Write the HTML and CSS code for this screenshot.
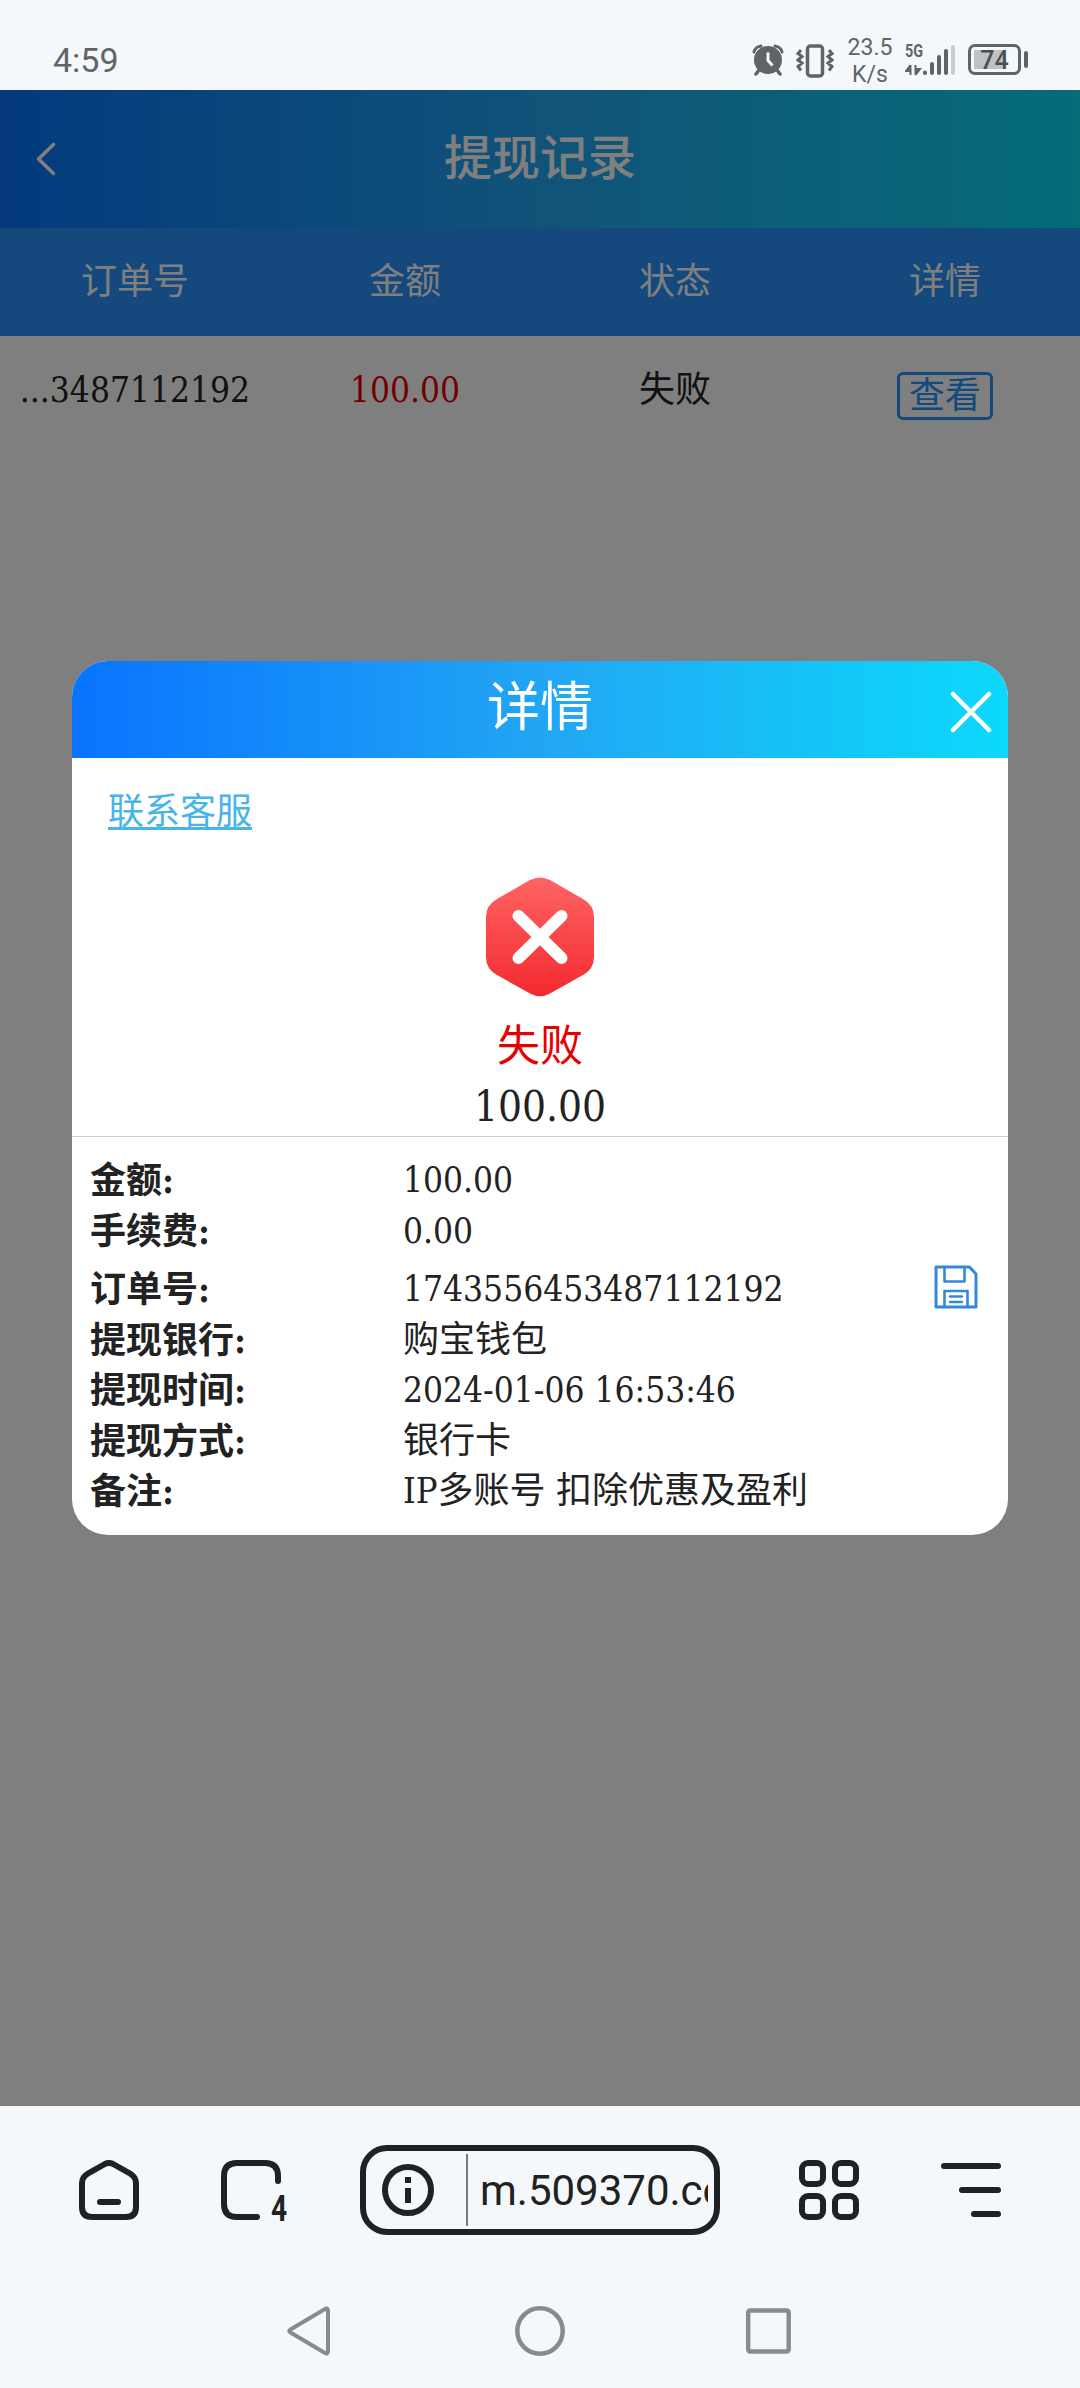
FILE: index.html
```
<!DOCTYPE html>
<html lang="zh-CN">
<head>
    <meta charset="UTF-8" />
    <title>提现记录</title>
    <link rel="stylesheet" href="styles.css">
</head>
<body>
    <div class="statusbar">
        <span class="clock">4:59</span>
        <div class="status_icons">
            <svg class="ic_alarm" width="32" height="32" viewBox="0 0 32 32">
                <circle cx="16" cy="16" r="14" fill="#616466"/>
                <path d="M2 8Q3 3 9 2M30 8Q29 3 23 2" fill="none" stroke="#616466" stroke-width="3" stroke-linecap="round"/>
                <path d="M7 26l-3 4M25 26l3 4" stroke="#616466" stroke-width="3.5" stroke-linecap="round"/>
                <path d="M16 8.500v8l4.500 5" fill="none" stroke="#f4f8fc" stroke-width="3"/>
            </svg>
            <svg class="ic_vibrate" width="38" height="34" viewBox="0 0 38 34">
                <rect x="11.500" y="2" width="15" height="30" rx="3" fill="none" stroke="#616466" stroke-width="3.500"/>
                <path d="M5 6l-3 3.500 4 3-4 3.500 4 3-4 3.500 3 4M33 6l3 3.500-4 3 4 3.500-4 3 4 3.500-3 4" fill="none" stroke="#616466" stroke-width="3"/>
            </svg>
            <div class="speed">23.5<br>K/s</div>
            <div class="signal">
                <span class="net">5G</span>
                <svg width="52" height="32" viewBox="0 0 52 32">
                    <path d="M5.500 21v10M5.500 21L1 27h4M10.500 21v10M10.500 31L15 25h-4" fill="#616466" stroke="#616466" stroke-width="2"/>
                    <path d="M20 28.500v.5M27 20v9M34 13v16M41 7v22" stroke="#616466" stroke-width="4" stroke-linecap="round"/>
                    <path d="M48 3v26" stroke="#cacdd0" stroke-width="4" stroke-linecap="round"/>
                </svg>
            </div>
            <div class="battery"><span>74</span></div>
        </div>
    </div>

    <div class="page">
        <div class="header">
            <svg class="back" width="22" height="36" viewBox="0 0 22 36">
                <path d="M18.500 3.500L3.500 18l15 14.500" fill="none" stroke="#fff" stroke-width="3.600" stroke-linecap="round" stroke-linejoin="round"/>
            </svg>
            <h1>提现记录</h1>
        </div>
        <div class="thead">
            <div>订单号</div>
            <div>金额</div>
            <div>状态</div>
            <div>详情</div>
        </div>
        <div class="trow">
            <div class="num">...3487112192</div>
            <div class="num red">100.00</div>
            <div>失败</div>
            <div><button class="btn_view">查看</button></div>
        </div>

        <div class="overlay">
            <div class="modal">
                <div class="modal_head">
                    <h2>详情</h2>
                    <svg class="close" width="42" height="42" viewBox="0 0 42 42">
                        <path d="M3 3l36 36M39 3L3 39" stroke="#fff" stroke-width="4.500" stroke-linecap="round"/>
                    </svg>
                </div>
                <div class="result">
                    <a class="service" href="#">联系客服</a>
                    <svg class="fail_icon" width="108" height="120" viewBox="0 0 108 120">
                        <defs>
                            <linearGradient id="fail" x1="0" y1="0" x2="0" y2="1">
                                <stop offset="0" stop-color="#ff6464"/>
                                <stop offset="1" stop-color="#f32a2f"/>
                            </linearGradient>
                        </defs>
                        <path d="M44 3Q54-2 64 3L97 22Q108 28 108 40V80Q108 92 97 98L64 116.500Q54 122 44 116.500L11 98Q0 92 0 80V40Q0 28 11 22Z" fill="url(#fail)"/>
                        <path d="M32.500 39l43 42M75.500 39l-43 42" stroke="#fff" stroke-width="12" stroke-linecap="round"/>
                    </svg>
                    <div class="result_text">失败</div>
                    <div class="result_amount">100.00</div>
                </div>
                <div class="details">
                    <div class="line"><b>金额:</b><span class="num">100.00</span></div>
                    <div class="line"><b>手续费:</b><span class="num">0.00</span></div>
                    <div class="line order">
                        <b>订单号:</b><span class="num">1743556453487112192</span>
                        <svg class="save" width="44" height="44" viewBox="0 0 44 44">
                            <path d="M2 2h33.500L42 9v33H2z" fill="none" stroke="#3388dc" stroke-width="3" stroke-linejoin="round"/>
                            <path d="M10.500 2v14.500h20V2M10.500 42V26h23v16M16 31.500h12M16 37h12" fill="none" stroke="#3388dc" stroke-width="2.600" stroke-linecap="round" stroke-linejoin="round"/>
                        </svg>
                    </div>
                    <div class="line"><b>提现银行:</b><span>购宝钱包</span></div>
                    <div class="line"><b>提现时间:</b><span class="num">2024-01-06 16:53:46</span></div>
                    <div class="line"><b>提现方式:</b><span>银行卡</span></div>
                    <div class="line"><b>备注:</b><span>IP多账号 扣除优惠及盈利</span></div>
                </div>
            </div>
        </div>
    </div>

    <div class="toolbar">
        <svg class="ic_home" width="60" height="60" viewBox="0 0 60 60">
            <path d="M25 4.500Q30 1.500 35 4.500L51 13.500Q57 17 57 23V47Q57 57 47 57H13Q3 57 3 47V23Q3 17 9 13.500ZM21 42h18" fill="none" stroke="#1f2122" stroke-width="6" stroke-linecap="round"/>
        </svg>
        <div class="tabs">
            <svg width="60" height="60" viewBox="0 0 60 60">
                <path d="M57 21V16Q57 3 44 3H16Q3 3 3 16V44Q3 57 16 57H36" fill="none" stroke="#1f2122" stroke-width="6" stroke-linecap="round"/>
            </svg>
            <span>4</span>
        </div>
        <div class="url">
            <svg width="52" height="52" viewBox="0 0 52 52">
                <circle cx="26" cy="26" r="23" fill="none" stroke="#1f2122" stroke-width="6"/>
                <path d="M26 13v6M26 24v15" stroke="#1f2122" stroke-width="6"/>
            </svg>
            <span class="url_text">m.509370.com</span>
        </div>
        <div class="apps"><i></i><i></i><i></i><i></i></div>
        <svg class="ic_menu" width="60" height="54" viewBox="0 0 60 54">
            <path d="M3 3h54M21 27h36M33 51h24" stroke="#1f2122" stroke-width="6" stroke-linecap="round"/>
        </svg>
    </div>
    <div class="navbar">
        <svg width="47" height="50" viewBox="0 0 47 50">
            <path d="M3.500 23.500L38 3Q41 1.500 41 5V45Q41 48.500 38 47L3.500 26.500Q1 25 3.500 23.500Z" fill="none" stroke="#888a8b" stroke-width="4"/>
        </svg>
        <svg width="50" height="50" viewBox="0 0 50 50">
            <circle cx="25" cy="25" r="22.700" fill="none" stroke="#888a8b" stroke-width="4.500"/>
        </svg>
        <svg width="45" height="46" viewBox="0 0 45 46">
            <rect x="2.200" y="2.500" width="40.500" height="41" rx="2" fill="none" stroke="#888a8b" stroke-width="4.400"/>
        </svg>
    </div>
</body>
</html>
```
FILE: styles.css
```
* {
    box-sizing: border-box;
}
body {
    margin: 0;
    width: 1080px;
    height: 2388px;
    overflow: hidden;
    background: #f4f8fb;
    color: #222;
    font-family: "DejaVu Serif Condensed", "Noto Sans CJK SC", sans-serif;
    font-size: 36px;
}
h1, h2 {
    margin: 0;
    color: #fff;
}
svg {
    display: block;
    flex: none;
}

/* status bar */
.statusbar {
    display: flex;
    justify-content: space-between;
    height: 90px;
    padding: 30px 52px 0 53px;
    color: #616466;
    font-family: Roboto, sans-serif;
}
.clock {
    font-size: 34px;
    line-height: 60px;
}
.status_icons {
    display: flex;
    align-items: flex-start;
    padding-top: 14px;
}
.ic_vibrate {
    margin-left: 12px;
}
.speed {
    width: 48px;
    margin: -10px 0 0 12px;
    font-size: 23px;
    line-height: 27px;
    text-align: center;
}
.signal {
    position: relative;
    margin-left: 11px;
}
.net {
    position: absolute;
    left: 0;
    top: -2px;
    font-size: 18px;
    font-weight: bold;
    line-height: 18px;
    transform: scaleX(.8);
    transform-origin: left;
}
.battery {
    position: relative;
    width: 53px;
    height: 31px;
    margin: 0 7px 0 11px;
    padding: 3px;
    border: 3px solid #616466;
    border-radius: 7px;
}
.battery span {
    display: block;
    height: 19px;
    background: linear-gradient(to right, #bfc2c5 75%, transparent 75%);
    color: #4c4f51;
    font-size: 25px;
    font-weight: 500;
    line-height: 22px;
    text-align: center;
}
.battery::after {
    content: "";
    position: absolute;
    right: -10px;
    top: 4px;
    width: 4px;
    height: 17px;
    border-radius: 2px;
    background: #616466;
}

/* page */
.page {
    position: relative;
    height: 2016px;
    background: #fff;
}
.header {
    display: flex;
    align-items: center;
    height: 138px;
    padding: 0 35px;
    background: linear-gradient(to right, #0874fb, #22a6f2 50%, #0ad8f0);
}
.header h1 {
    flex: 1;
    padding-right: 22px;
    font-size: 48px;
    font-weight: 500;
    line-height: 60px;
    margin-top: -2px;
    text-align: center;
}
.thead, .trow {
    display: grid;
    grid-template-columns: repeat(4, 1fr);
    text-align: center;
}
.thead {
    height: 108px;
    background: #2a92fa;
    color: #fff;
    line-height: 108px;
}
.trow {
    padding-top: 27px;
    line-height: 54px;
}
.num {
    font-size: 35px;
}
.red {
    color: #e60000;
}
.btn_view {
    display: block;
    width: 96px;
    height: 48px;
    margin: 9px auto 0;
    padding: 0;
    border: 3px solid #2a92fa;
    border-radius: 6px;
    background: none;
    color: #2a92fa;
    font: inherit;
    line-height: 42px;
}

/* detail popup */
.overlay {
    position: absolute;
    inset: 0;
    display: flex;
    align-items: center;
    justify-content: center;
    background: rgba(0, 0, 0, .5);
}
.modal {
    width: 936px;
    height: 874px;
    border-radius: 36px;
    background: #fff;
    overflow: hidden;
}
.modal_head {
    position: relative;
    height: 97px;
    background: linear-gradient(to right, #0874fe, #22a6f4 50%, #0cd9fb);
}
.modal_head h2 {
    font-size: 53px;
    font-weight: normal;
    line-height: 94px;
    text-align: center;
}
.close {
    position: absolute;
    right: 16px;
    top: 30px;
}
.result {
    display: flex;
    flex-direction: column;
    align-items: center;
    height: 379px;
    padding-top: 27px;
    border-bottom: 1px solid #ccc;
}
.service {
    align-self: flex-start;
    margin-left: 36px;
    color: #48b4e8;
    line-height: 54px;
    text-decoration: underline;
    text-decoration-thickness: 3px;
    text-underline-offset: 3px;
}
.fail_icon {
    margin-top: 38px;
}
.result_text {
    margin-top: 18px;
    color: #e60000;
    font-size: 43px;
    line-height: 62px;
}
.result_amount {
    font-size: 42px;
    line-height: 60px;
}
.details {
    padding: 18px 18px 0;
}
.line {
    display: flex;
    align-items: center;
    height: 50.5px;
    line-height: 50px;
}
.line b {
    width: 313px;
}
.order {
    height: 58.5px;
    padding-top: 8px;
}
.save {
    margin: -5px 12px 0 auto;
}

/* browser bar */
.toolbar {
    display: flex;
    align-items: center;
    gap: 79px;
    height: 168px;
    padding: 0 79px;
    font-family: Roboto, sans-serif;
    color: #1f2122;
}
.ic_home {
    margin-right: 3px;
}
.ic_menu {
    margin-left: 3px;
}
.tabs {
    position: relative;
}
.tabs span {
    position: absolute;
    left: 50px;
    top: 31px;
    font-size: 36px;
    font-weight: bold;
    line-height: 36px;
    transform: scaleX(.78);
    transform-origin: left;
}
.url {
    display: flex;
    align-items: center;
    flex: none;
    width: 360px;
    height: 90px;
    padding: 0 6px 0 16px;
    border: 6px solid #1f2122;
    border-radius: 27px;
}
.url_text {
    flex: 1;
    height: 72px;
    margin-left: 32px;
    padding-left: 12px;
    border-left: 2px solid #777a7c;
    overflow: hidden;
    font-size: 42px;
    line-height: 74px;
    white-space: nowrap;
}
.apps {
    display: grid;
    grid-template-columns: 27px 27px;
    gap: 6px;
}
.apps i {
    height: 27px;
    border: 6px solid #1f2122;
    border-radius: 9px;
}
.navbar {
    display: flex;
    align-items: center;
    justify-content: space-between;
    height: 114px;
    padding: 0 289px 0 287px;
}
```
